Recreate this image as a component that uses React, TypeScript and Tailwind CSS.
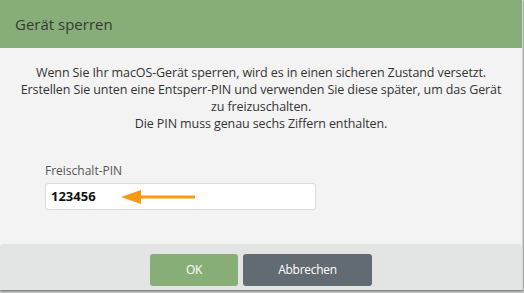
import React from "react";

export default function App() {
  return (
    <div className="w-[524px] h-[293px] bg-[#c9cbca] overflow-hidden" style={{ fontFamily: '"Open Sans", sans-serif' }}>
      <div className="w-[523px] h-[290px] flex flex-col bg-[#f3f3f3] border-r border-[#d4d4d4] shadow-[0_1px_2px_rgba(0,0,0,0.5)]">
        {/* Header */}
        <div className="h-[48px] shrink-0 bg-[#87ae78] flex items-center px-[15px]">
          <h1 className="text-[15px] text-[#353a34] leading-none">Gerät sperren</h1>
        </div>

        {/* Body */}
        <div className="flex-1 px-[16px] pt-[16px]">
          <p className="text-[12.5px] leading-[17px] text-[#333] text-center tracking-[-0.1px]">
            Wenn Sie Ihr macOS-Gerät sperren, wird es in einen sicheren Zustand versetzt.
            <br />
            Erstellen Sie unten eine Entsperr-PIN und verwenden Sie diese später, um das Gerät zu freizuschalten.
            <br />
            Die PIN muss genau sechs Ziffern enthalten.
          </p>

          <div className="mt-[31px] pl-[29px]">
            <label className="block text-[12px] leading-[16px] text-[#555]">Freischalt-PIN</label>
            <div className="relative mt-[4px] w-[271px] h-[27px] bg-white border border-[#dcdcdc] rounded-[3px] flex items-center px-[5px]">
              <span className="text-[13px] font-bold text-[#111]">123456</span>
              <svg className="absolute left-[75px] top-[5px]" width="76" height="16" viewBox="0 0 76 16">
                <polygon points="0,8 20,1 20,15" fill="#f59a12" />
                <rect x="18" y="6.5" width="56" height="3" fill="#f59a12" />
              </svg>
            </div>
          </div>
        </div>

        {/* Footer */}
        <div className="h-[46px] shrink-0 bg-[#e3e5e4] rounded-t-[3px] flex justify-center items-start pt-[10px] gap-[5px]">
          <button className="w-[88px] h-[32px] rounded-[3px] bg-[#88ae78] text-white text-[12px] tracking-[-0.3px]">OK</button>
          <button className="w-[129px] h-[32px] rounded-[3px] bg-[#636b72] text-white text-[12px] tracking-[-0.3px]">Abbrechen</button>
        </div>
      </div>
    </div>
  );
}
